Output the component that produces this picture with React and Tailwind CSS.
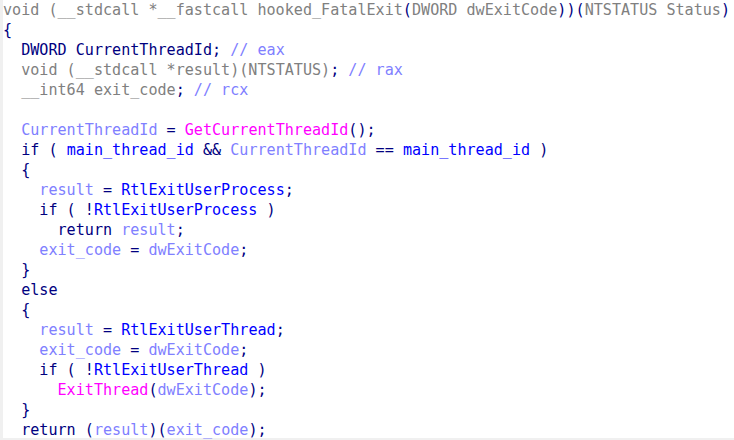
const N = 'text-[#000080]'
const G = 'text-[#808080]'
const P = 'text-[#8080ff]'
const B = 'text-[#0000ff]'
const M = 'text-[#ff00ff]'

// each line: indent level + list of [class, text]
const lines = [
  [0, [[G, 'void ('], [G, '__stdcall *__fastcall hooked_FatalExit'], [N, '('], [G, 'DWORD dwExitCode'], [N, '))('], [G, 'NTSTATUS Status'], [N, ')']]],
  [0, [[N, '{']]],
  [1, [[N, 'DWORD CurrentThreadId; '], [P, '// eax']]],
  [1, [[G, 'void (__stdcall *result)(NTSTATUS)'], [N, '; '], [P, '// rax']]],
  [1, [[G, '__int64 exit_code'], [N, '; '], [P, '// rcx']]],
  [0, []],
  [1, [[P, 'CurrentThreadId'], [N, ' = '], [M, 'GetCurrentThreadId'], [N, '();']]],
  [1, [[N, 'if ( '], [B, 'main_thread_id'], [N, ' && '], [P, 'CurrentThreadId'], [N, ' == '], [B, 'main_thread_id'], [N, ' )']]],
  [1, [[N, '{']]],
  [2, [[P, 'result'], [N, ' = '], [B, 'RtlExitUserProcess'], [N, ';']]],
  [2, [[N, 'if ( !'], [B, 'RtlExitUserProcess'], [N, ' )']]],
  [3, [[N, 'return '], [P, 'result'], [N, ';']]],
  [2, [[P, 'exit_code'], [N, ' = '], [P, 'dwExitCode'], [N, ';']]],
  [1, [[N, '}']]],
  [1, [[N, 'else']]],
  [1, [[N, '{']]],
  [2, [[P, 'result'], [N, ' = '], [B, 'RtlExitUserThread'], [N, ';']]],
  [2, [[P, 'exit_code'], [N, ' = '], [P, 'dwExitCode'], [N, ';']]],
  [2, [[N, 'if ( !'], [B, 'RtlExitUserThread'], [N, ' )']]],
  [3, [[M, 'ExitThread'], [N, '('], [P, 'dwExitCode'], [N, ');']]],
  [1, [[N, '}']]],
  [1, [[N, 'return ('], [P, 'result'], [N, ')('], [P, 'exit_code'], [N, ');']]],
]

export default function App() {
  return (
    <div className="w-[734px] h-[440px] bg-white flex overflow-hidden shadow-[inset_0_-2px_0_#f0f0f0]">
      <div className="w-[3px] bg-[#f0f0f0] shrink-0" />
      <div
        className="flex-1 text-[15.1px] leading-[20px] whitespace-pre"
        style={{ fontFamily: '"DejaVu Sans Mono", "Liberation Mono", monospace' }}
      >
        {lines.map(([indent, parts], i) => (
          <div key={i} className="h-[20px]">
            {'  '.repeat(indent)}
            {parts.map(([cls, t], j) => (
              <span key={j} className={cls}>{t}</span>
            ))}
          </div>
        ))}
      </div>
    </div>
  )
}
